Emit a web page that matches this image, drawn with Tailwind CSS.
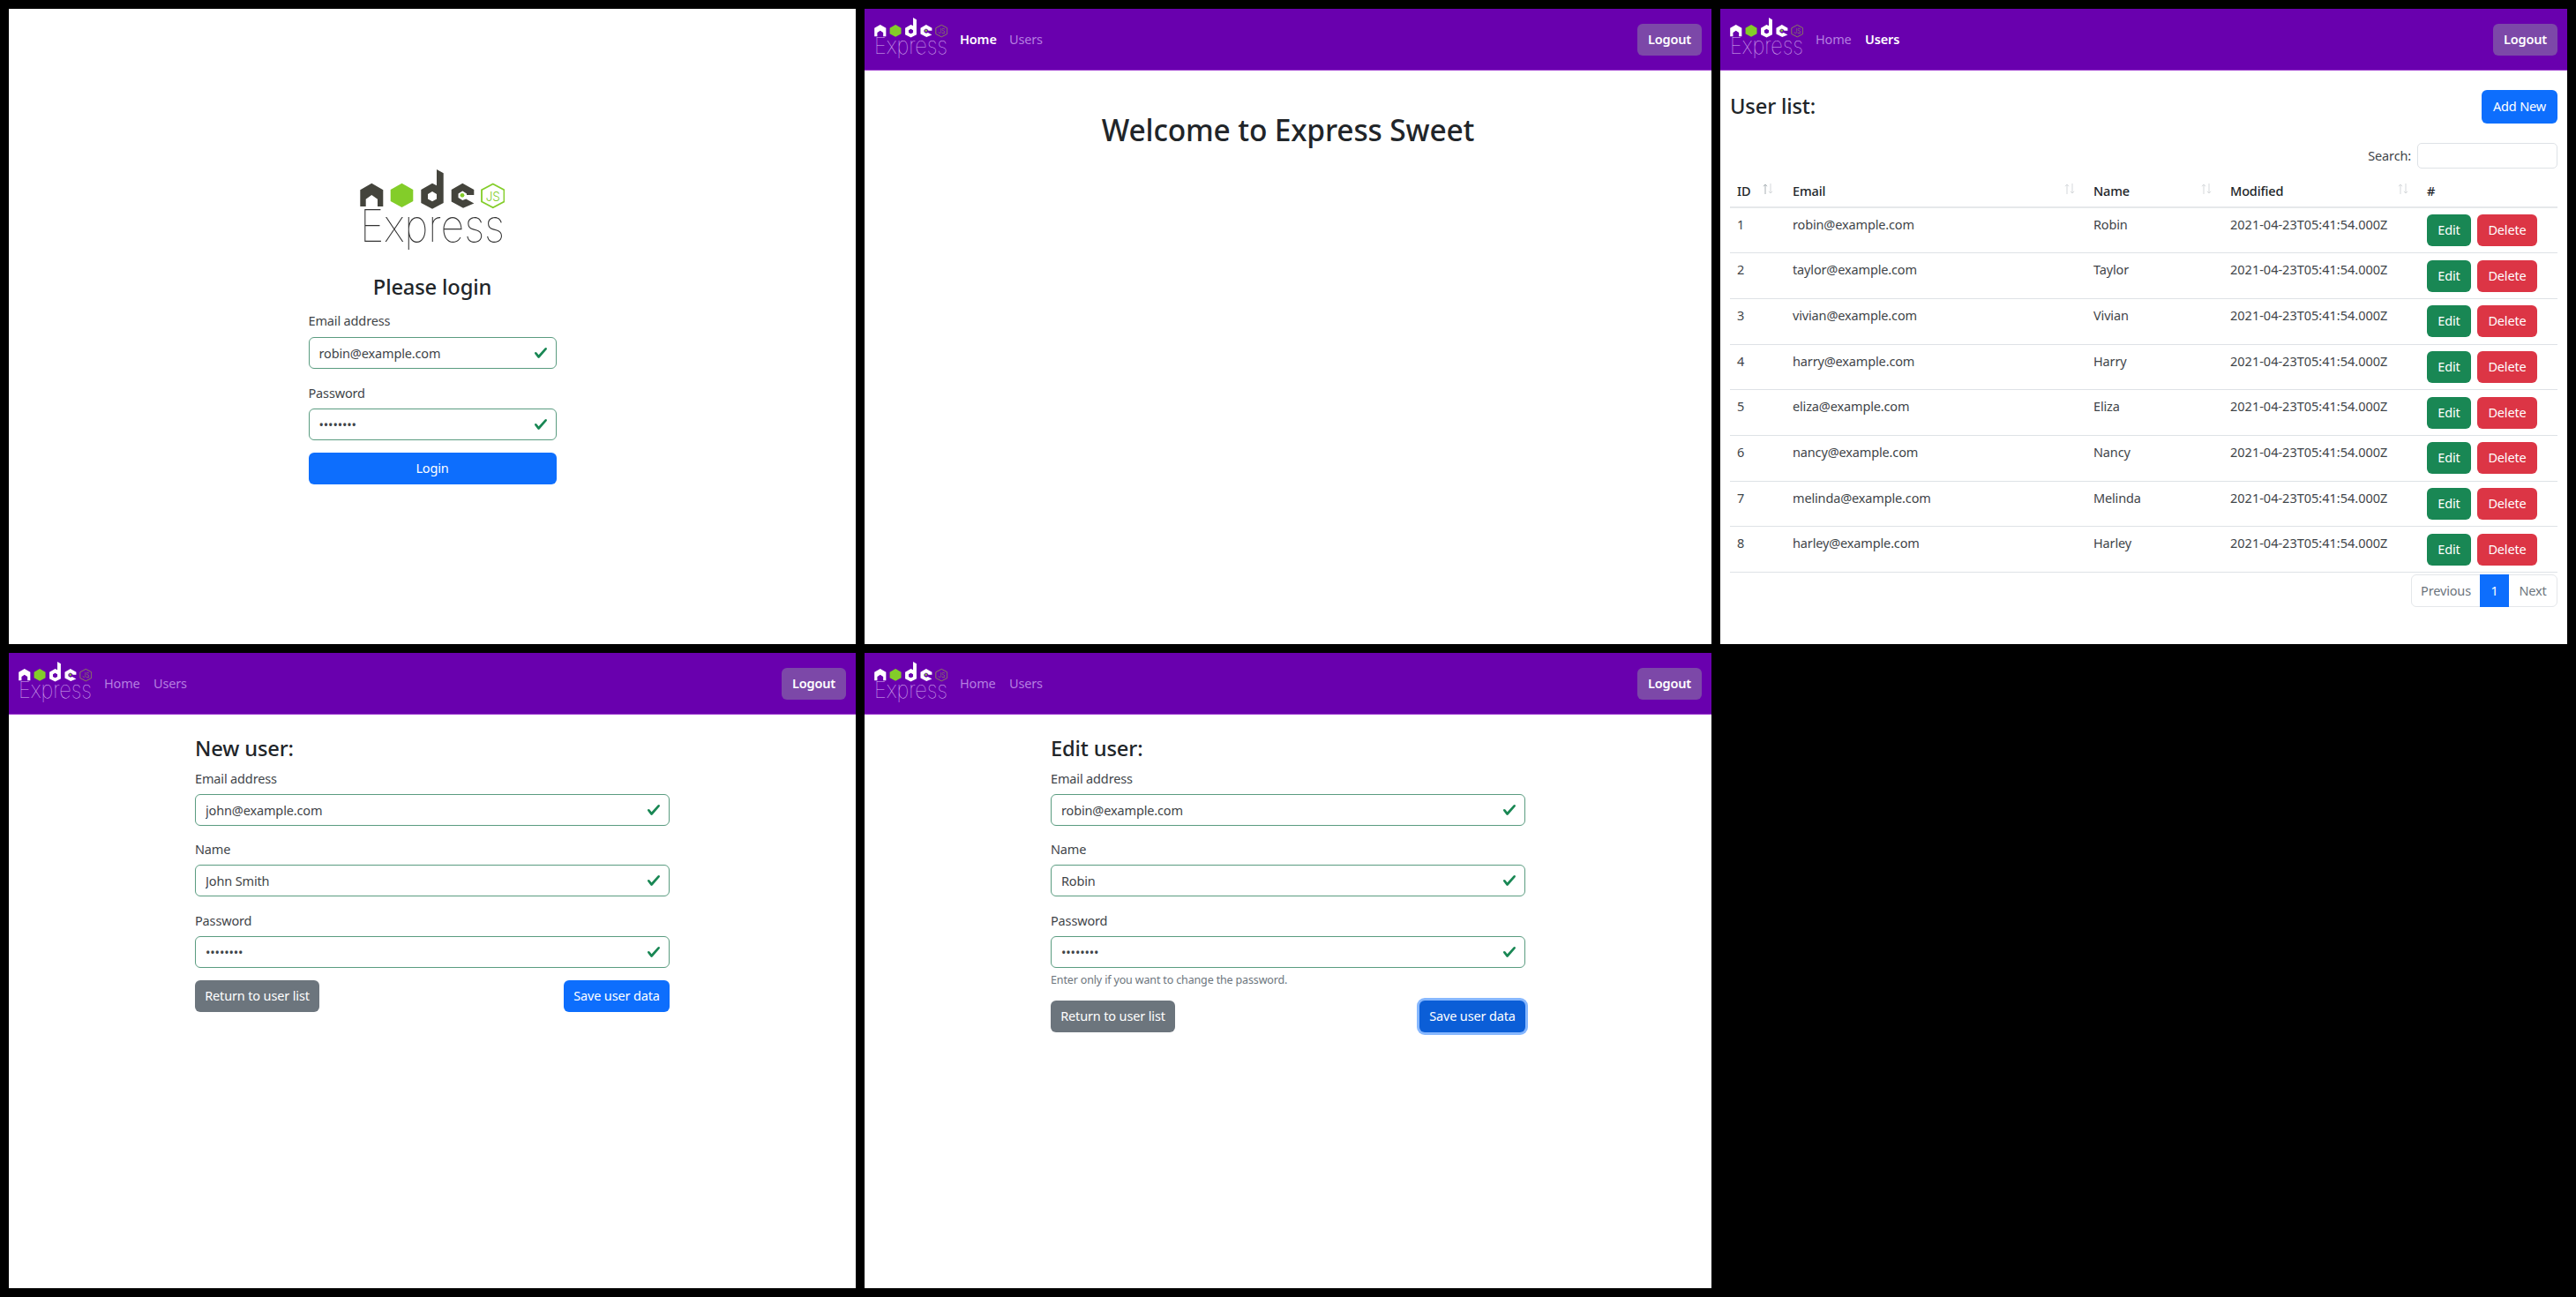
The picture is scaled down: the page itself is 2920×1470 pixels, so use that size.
<!DOCTYPE html>
<html lang="en">
<head>
<meta charset="UTF-8">
<title>Express Sweet screenshots</title>
<script src="https://cdn.jsdelivr.net/npm/@tailwindcss/browser@4"></script>
</head>
<body class="bg-black font-['Noto_Sans',sans-serif] text-[14.5px] tracking-[-0.15px] text-[#212529]">

<svg class="hidden">
  <symbol id="node-logo" viewBox="0 0 164 91">
    <path fill="currentColor" d="M13.3 15.7 26.3 23.2V42H20V33.7L13.3 29 6.7 33.7V42H.3V23.2Z"/>
    <path fill="#83cd29" d="M47.5 15.7 60.3 23V36L47.5 43 34.7 36V23Z"/>
    <path fill="currentColor" fill-rule="evenodd" d="M87 0 94.7 4.3V38L82 44.7 69.3 38V23L82 15.7 87 18.3ZM82 25 77 28V33.5L82 36.3 87 33.5V28Z"/>
    <path fill="currentColor" d="M116.3 15.7 129.3 23V29H121V27.5L116.3 24.5 111.5 27.5V32L116.3 35 120.3 33.5 129.3 38.5 117 43.7 103.7 36.5V23Z"/>
    <circle cx="116" cy="29.3" r="2.4" fill="#83cd29"/>
    <path fill="none" stroke="var(--js)" stroke-width="1.8" d="M150.8 16.5 163.5 23.3V36.5L150.8 43.3 138 36.5V23.3Z"/>
    <text x="150.8" y="35.5" text-anchor="middle" font-family="Inter" font-weight="300" font-size="15" textLength="16" lengthAdjust="spacingAndGlyphs" fill="var(--js)">JS</text>
    <text x="0" y="82" font-family="Inter" font-weight="100" font-size="51" textLength="164" lengthAdjust="spacingAndGlyphs" fill="var(--ex)">Express</text>
  </symbol>
  <symbol id="check" viewBox="0 0 8 8">
    <path fill="#198754" d="M2.3 6.73.6 4.53c-.4-1.04.46-1.4 1.1-.8l1.1 1.4 3.4-3.8c.6-.63 1.6-.27 1.2.7l-4 4.6c-.43.5-.8.4-1.1.1z"/>
  </symbol>
  <symbol id="sort" viewBox="0 0 12 12">
    <path fill="none" stroke="currentColor" d="M3 12V1M1 3.2 3 1 5 3.2"/>
    <path fill="none" stroke="#d5d8db" d="M9 0V11M7 8.8 9 11 11 8.8"/>
  </symbol>
</svg>

<div class="grid grid-cols-[960px_960px_960px] grid-rows-[720px_720px] gap-[10px] p-[10px] w-[2920px] h-[1470px]">

  <!-- login -->
  <section class="bg-white overflow-hidden pt-[182px]">
    <div class="w-[281px] mx-auto">
      <svg class="block mx-auto w-[164px] h-[91px] text-[#44443c] [--js:#83cd29] [--ex:#333]"><use href="#node-logo"/></svg>
      <h1 class="mt-[26px] h-[32px] leading-[32px] text-center text-[23.7px] font-medium">Please login</h1>
      <label class="block mt-[11px] h-[22px] leading-[22px] text-[#3f4549]">Email address</label>
      <div class="relative mt-[8px]">
        <input class="block w-full h-[36px] px-[11px] rounded-[6px] border border-[#5a9c80] text-[#3f4549] outline-none" value="robin@example.com">
        <svg class="absolute right-[10px] top-[10px] w-[16px] h-[16px]"><use href="#check"/></svg>
      </div>
      <label class="block mt-[16px] h-[22px] leading-[22px] text-[#3f4549]">Password</label>
      <div class="relative mt-[7px]">
        <input type="password" class="block w-full h-[36px] px-[11px] rounded-[6px] border border-[#5a9c80] text-[#3f4549] outline-none" value="password">
        <svg class="absolute right-[10px] top-[10px] w-[16px] h-[16px]"><use href="#check"/></svg>
      </div>
      <button class="block w-full h-[36px] mt-[14px] rounded-[6px] bg-[#0d6efd] text-white">Login</button>
    </div>
  </section>

  <!-- home -->
  <section class="bg-white overflow-hidden">
    <nav class="flex items-center justify-between h-[70px] px-[11px] bg-[#6900ae] border-b border-[#a040d0]">
      <div class="flex items-center">
        <svg class="w-[83px] h-[46px] mb-[3px] text-white [--js:#8d8a55] [--ex:#d8b4f0]"><use href="#node-logo"/></svg>
        <a class="ml-[14px] w-[41px] font-semibold text-white">Home</a>
        <a class="ml-[15px] text-[#b57ee0]">Users</a>
      </div>
      <button class="w-[73px] h-[36px] rounded-[6px] bg-[#7c48a8] font-semibold text-white">Logout</button>
    </nav>
    <h1 class="mt-[45px] h-[45px] leading-[45px] text-center text-[33.5px] font-medium">Welcome to Express Sweet</h1>
  </section>

  <!-- user list -->
  <section class="bg-white overflow-hidden">
    <nav class="flex items-center justify-between h-[70px] px-[11px] bg-[#6900ae] border-b border-[#a040d0]">
      <div class="flex items-center">
        <svg class="w-[83px] h-[46px] mb-[3px] text-white [--js:#8d8a55] [--ex:#d8b4f0]"><use href="#node-logo"/></svg>
        <a class="ml-[14px] w-[41px] text-[#b57ee0]">Home</a>
        <a class="ml-[15px] font-semibold text-white">Users</a>
      </div>
      <button class="w-[73px] h-[36px] rounded-[6px] bg-[#7c48a8] font-semibold text-white">Logout</button>
    </nav>
    <div class="px-[11px] pt-[22px]">
      <div class="flex items-center justify-between">
        <h2 class="text-[23.7px] leading-[30px] -mt-[2px] font-medium">User list:</h2>
        <button class="w-[86px] h-[38px] rounded-[6px] bg-[#0d6efd] text-white">Add New</button>
      </div>
      <div class="flex items-center justify-end mt-[22px]">
        <label class="text-[#3f4549]">Search:</label>
        <input class="w-[159px] h-[29px] ml-[7px] rounded-[5px] border border-[#dee2e6]">
      </div>
      <table class="table-fixed w-[938px] text-left">
        <colgroup>
          <col class="w-[63px]"><col class="w-[341px]"><col class="w-[155px]"><col class="w-[223px]"><col class="w-[156px]">
        </colgroup>
        <thead>
          <tr class="h-[44px] border-b-2 border-[#e6e8ea]">
            <th class="relative align-bottom pb-[6px] px-[8px] font-medium">ID<svg class="absolute right-[14px] top-[17px] w-[12px] h-[12px] text-[#a8b0b4]"><use href="#sort"/></svg></th>
            <th class="relative align-bottom pb-[6px] px-[8px] font-medium">Email<svg class="absolute right-[13px] top-[17px] w-[12px] h-[12px] text-[#d5d8db]"><use href="#sort"/></svg></th>
            <th class="relative align-bottom pb-[6px] px-[8px] font-medium">Name<svg class="absolute right-[13px] top-[17px] w-[12px] h-[12px] text-[#d5d8db]"><use href="#sort"/></svg></th>
            <th class="relative align-bottom pb-[6px] px-[8px] font-medium">Modified<svg class="absolute right-[13px] top-[17px] w-[12px] h-[12px] text-[#d5d8db]"><use href="#sort"/></svg></th>
            <th class="align-bottom pb-[6px] px-[8px] font-medium">#</th>
          </tr>
        </thead>
        <tbody class="text-[#3f4549]">
          <tr class="h-[51.7px] border-b border-[#dee2e6]">
            <td class="align-top pt-[8px] px-[8px]">1</td><td class="align-top pt-[8px] px-[8px]">robin@example.com</td><td class="align-top pt-[8px] px-[8px]">Robin</td><td class="align-top pt-[8px] px-[8px] tracking-normal">2021-04-23T05:41:54.000Z</td>
            <td class="px-[8px]"><div class="flex gap-[7px]"><button class="w-[50px] h-[36px] rounded-[6px] bg-[#198754] text-white">Edit</button><button class="w-[68px] h-[36px] rounded-[6px] bg-[#dc3545] text-white">Delete</button></div></td>
          </tr>
          <tr class="h-[51.7px] border-b border-[#dee2e6]">
            <td class="align-top pt-[8px] px-[8px]">2</td><td class="align-top pt-[8px] px-[8px]">taylor@example.com</td><td class="align-top pt-[8px] px-[8px]">Taylor</td><td class="align-top pt-[8px] px-[8px] tracking-normal">2021-04-23T05:41:54.000Z</td>
            <td class="px-[8px]"><div class="flex gap-[7px]"><button class="w-[50px] h-[36px] rounded-[6px] bg-[#198754] text-white">Edit</button><button class="w-[68px] h-[36px] rounded-[6px] bg-[#dc3545] text-white">Delete</button></div></td>
          </tr>
          <tr class="h-[51.7px] border-b border-[#dee2e6]">
            <td class="align-top pt-[8px] px-[8px]">3</td><td class="align-top pt-[8px] px-[8px]">vivian@example.com</td><td class="align-top pt-[8px] px-[8px]">Vivian</td><td class="align-top pt-[8px] px-[8px] tracking-normal">2021-04-23T05:41:54.000Z</td>
            <td class="px-[8px]"><div class="flex gap-[7px]"><button class="w-[50px] h-[36px] rounded-[6px] bg-[#198754] text-white">Edit</button><button class="w-[68px] h-[36px] rounded-[6px] bg-[#dc3545] text-white">Delete</button></div></td>
          </tr>
          <tr class="h-[51.7px] border-b border-[#dee2e6]">
            <td class="align-top pt-[8px] px-[8px]">4</td><td class="align-top pt-[8px] px-[8px]">harry@example.com</td><td class="align-top pt-[8px] px-[8px]">Harry</td><td class="align-top pt-[8px] px-[8px] tracking-normal">2021-04-23T05:41:54.000Z</td>
            <td class="px-[8px]"><div class="flex gap-[7px]"><button class="w-[50px] h-[36px] rounded-[6px] bg-[#198754] text-white">Edit</button><button class="w-[68px] h-[36px] rounded-[6px] bg-[#dc3545] text-white">Delete</button></div></td>
          </tr>
          <tr class="h-[51.7px] border-b border-[#dee2e6]">
            <td class="align-top pt-[8px] px-[8px]">5</td><td class="align-top pt-[8px] px-[8px]">eliza@example.com</td><td class="align-top pt-[8px] px-[8px]">Eliza</td><td class="align-top pt-[8px] px-[8px] tracking-normal">2021-04-23T05:41:54.000Z</td>
            <td class="px-[8px]"><div class="flex gap-[7px]"><button class="w-[50px] h-[36px] rounded-[6px] bg-[#198754] text-white">Edit</button><button class="w-[68px] h-[36px] rounded-[6px] bg-[#dc3545] text-white">Delete</button></div></td>
          </tr>
          <tr class="h-[51.7px] border-b border-[#dee2e6]">
            <td class="align-top pt-[8px] px-[8px]">6</td><td class="align-top pt-[8px] px-[8px]">nancy@example.com</td><td class="align-top pt-[8px] px-[8px]">Nancy</td><td class="align-top pt-[8px] px-[8px] tracking-normal">2021-04-23T05:41:54.000Z</td>
            <td class="px-[8px]"><div class="flex gap-[7px]"><button class="w-[50px] h-[36px] rounded-[6px] bg-[#198754] text-white">Edit</button><button class="w-[68px] h-[36px] rounded-[6px] bg-[#dc3545] text-white">Delete</button></div></td>
          </tr>
          <tr class="h-[51.7px] border-b border-[#dee2e6]">
            <td class="align-top pt-[8px] px-[8px]">7</td><td class="align-top pt-[8px] px-[8px]">melinda@example.com</td><td class="align-top pt-[8px] px-[8px]">Melinda</td><td class="align-top pt-[8px] px-[8px] tracking-normal">2021-04-23T05:41:54.000Z</td>
            <td class="px-[8px]"><div class="flex gap-[7px]"><button class="w-[50px] h-[36px] rounded-[6px] bg-[#198754] text-white">Edit</button><button class="w-[68px] h-[36px] rounded-[6px] bg-[#dc3545] text-white">Delete</button></div></td>
          </tr>
          <tr class="h-[51.7px] border-b border-[#dee2e6]">
            <td class="align-top pt-[8px] px-[8px]">8</td><td class="align-top pt-[8px] px-[8px]">harley@example.com</td><td class="align-top pt-[8px] px-[8px]">Harley</td><td class="align-top pt-[8px] px-[8px] tracking-normal">2021-04-23T05:41:54.000Z</td>
            <td class="px-[8px]"><div class="flex gap-[7px]"><button class="w-[50px] h-[36px] rounded-[6px] bg-[#198754] text-white">Edit</button><button class="w-[68px] h-[36px] rounded-[6px] bg-[#dc3545] text-white">Delete</button></div></td>
          </tr>
        </tbody>
      </table>
      <div class="flex justify-end mt-[2px]">
        <div class="flex h-[37px] items-center rounded-[6px] border border-[#e4e7ea] text-[#6c757d]">
          <span class="w-[77px] text-center">Previous</span>
          <span class="flex items-center justify-center w-[33px] h-[37px] bg-[#0d6efd] text-white">1</span>
          <span class="w-[54px] text-center">Next</span>
        </div>
      </div>
    </div>
  </section>

  <!-- new user -->
  <section class="bg-white overflow-hidden">
    <nav class="flex items-center justify-between h-[70px] px-[11px] bg-[#6900ae] border-b border-[#a040d0]">
      <div class="flex items-center">
        <svg class="w-[83px] h-[46px] mb-[3px] text-white [--js:#8d8a55] [--ex:#d8b4f0]"><use href="#node-logo"/></svg>
        <a class="ml-[14px] w-[41px] text-[#b57ee0]">Home</a>
        <a class="ml-[15px] text-[#b57ee0]">Users</a>
      </div>
      <button class="w-[73px] h-[36px] rounded-[6px] bg-[#7c48a8] font-semibold text-white">Logout</button>
    </nav>
    <div class="w-[538px] mx-auto">
      <h2 class="mt-[22px] h-[32px] leading-[32px] text-[23.7px] font-medium">New user:</h2>
      <label class="block mt-[7px] h-[22px] leading-[22px] text-[#3f4549]">Email address</label>
      <div class="relative mt-[7px]">
        <input class="block w-full h-[36px] px-[11px] rounded-[6px] border border-[#5a9c80] text-[#3f4549] outline-none" value="john@example.com">
        <svg class="absolute right-[10px] top-[10px] w-[16px] h-[16px]"><use href="#check"/></svg>
      </div>
      <label class="block mt-[15px] h-[22px] leading-[22px] text-[#3f4549]">Name</label>
      <div class="relative mt-[7px]">
        <input class="block w-full h-[36px] px-[11px] rounded-[6px] border border-[#5a9c80] text-[#3f4549] outline-none" value="John Smith">
        <svg class="absolute right-[10px] top-[10px] w-[16px] h-[16px]"><use href="#check"/></svg>
      </div>
      <label class="block mt-[16px] h-[22px] leading-[22px] text-[#3f4549]">Password</label>
      <div class="relative mt-[7px]">
        <input type="password" class="block w-full h-[36px] px-[11px] rounded-[6px] border border-[#5a9c80] text-[#3f4549] outline-none" value="password">
        <svg class="absolute right-[10px] top-[10px] w-[16px] h-[16px]"><use href="#check"/></svg>
      </div>
      <div class="flex justify-between mt-[14px]">
        <button class="w-[141px] h-[36px] rounded-[6px] bg-[#6c757d] text-white">Return to user list</button>
        <button class="w-[120px] h-[36px] rounded-[6px] bg-[#0d6efd] text-white">Save user data</button>
      </div>
    </div>
  </section>

  <!-- edit user -->
  <section class="bg-white overflow-hidden">
    <nav class="flex items-center justify-between h-[70px] px-[11px] bg-[#6900ae] border-b border-[#a040d0]">
      <div class="flex items-center">
        <svg class="w-[83px] h-[46px] mb-[3px] text-white [--js:#8d8a55] [--ex:#d8b4f0]"><use href="#node-logo"/></svg>
        <a class="ml-[14px] w-[41px] text-[#b57ee0]">Home</a>
        <a class="ml-[15px] text-[#b57ee0]">Users</a>
      </div>
      <button class="w-[73px] h-[36px] rounded-[6px] bg-[#7c48a8] font-semibold text-white">Logout</button>
    </nav>
    <div class="w-[538px] mx-auto">
      <h2 class="mt-[22px] h-[32px] leading-[32px] text-[23.7px] font-medium">Edit user:</h2>
      <label class="block mt-[7px] h-[22px] leading-[22px] text-[#3f4549]">Email address</label>
      <div class="relative mt-[7px]">
        <input class="block w-full h-[36px] px-[11px] rounded-[6px] border border-[#5a9c80] text-[#3f4549] outline-none" value="robin@example.com">
        <svg class="absolute right-[10px] top-[10px] w-[16px] h-[16px]"><use href="#check"/></svg>
      </div>
      <label class="block mt-[15px] h-[22px] leading-[22px] text-[#3f4549]">Name</label>
      <div class="relative mt-[7px]">
        <input class="block w-full h-[36px] px-[11px] rounded-[6px] border border-[#5a9c80] text-[#3f4549] outline-none" value="Robin">
        <svg class="absolute right-[10px] top-[10px] w-[16px] h-[16px]"><use href="#check"/></svg>
      </div>
      <label class="block mt-[16px] h-[22px] leading-[22px] text-[#3f4549]">Password</label>
      <div class="relative mt-[7px]">
        <input type="password" class="block w-full h-[36px] px-[11px] rounded-[6px] border border-[#5a9c80] text-[#3f4549] outline-none" value="password">
        <svg class="absolute right-[10px] top-[10px] w-[16px] h-[16px]"><use href="#check"/></svg>
      </div>
      <p class="mt-[5px] h-[18px] leading-[18px] text-[12.5px] text-[#6c757d]">Enter only if you want to change the password.</p>
      <div class="flex justify-between mt-[14px]">
        <button class="w-[141px] h-[36px] rounded-[6px] bg-[#6c757d] text-white">Return to user list</button>
        <button class="w-[120px] h-[36px] rounded-[6px] bg-[#0b5ed7] text-white ring-[3px] ring-[#86b7fe]">Save user data</button>
      </div>
    </div>
  </section>

</div>
</body>
</html>
